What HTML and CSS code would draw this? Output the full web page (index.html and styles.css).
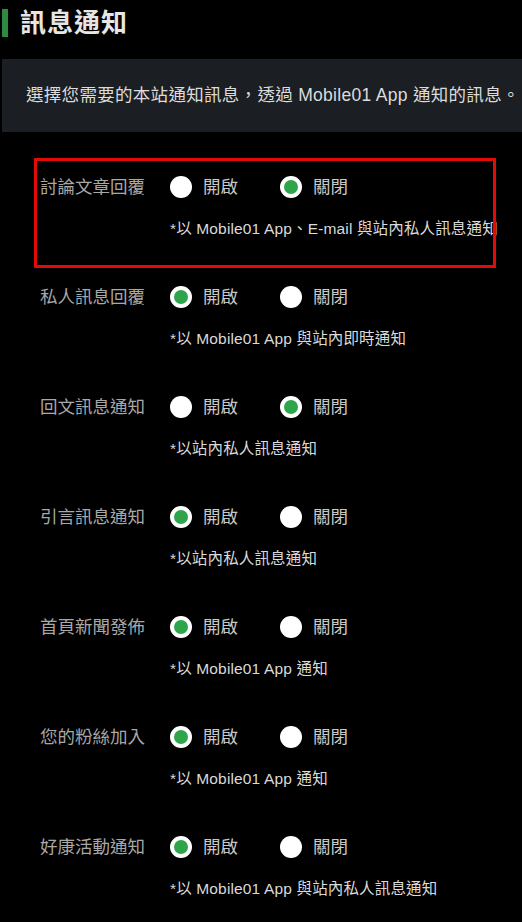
FILE: index.html
```html
<!DOCTYPE html>
<html lang="zh-Hant">
<head>
    <meta charset="UTF-8">
    <meta name="viewport" content="width=device-width, initial-scale=1.0">
    <title>訊息通知</title>
    <link rel="stylesheet" href="styles.css">
</head>
<body>
    <div class="page">
        <h2 class="title">訊息通知</h2>
        <div class="intro">選擇您需要的本站通知訊息，透過 Mobile01 App 通知的訊息。</div>

        <div class="list">
            <div class="row highlight">
                <div class="label">討論文章回覆</div>
                <div class="body">
                    <div class="options">
                        <label class="option"><span class="radio"></span>開啟</label>
                        <label class="option"><span class="radio on"></span>關閉</label>
                    </div>
                    <div class="note">*以 Mobile01 App、E-mail 與站內私人訊息通知</div>
                </div>
            </div>
            <div class="row">
                <div class="label">私人訊息回覆</div>
                <div class="body">
                    <div class="options">
                        <label class="option"><span class="radio on"></span>開啟</label>
                        <label class="option"><span class="radio"></span>關閉</label>
                    </div>
                    <div class="note">*以 Mobile01 App 與站內即時通知</div>
                </div>
            </div>
            <div class="row">
                <div class="label">回文訊息通知</div>
                <div class="body">
                    <div class="options">
                        <label class="option"><span class="radio"></span>開啟</label>
                        <label class="option"><span class="radio on"></span>關閉</label>
                    </div>
                    <div class="note">*以站內私人訊息通知</div>
                </div>
            </div>
            <div class="row">
                <div class="label">引言訊息通知</div>
                <div class="body">
                    <div class="options">
                        <label class="option"><span class="radio on"></span>開啟</label>
                        <label class="option"><span class="radio"></span>關閉</label>
                    </div>
                    <div class="note">*以站內私人訊息通知</div>
                </div>
            </div>
            <div class="row">
                <div class="label">首頁新聞發佈</div>
                <div class="body">
                    <div class="options">
                        <label class="option"><span class="radio on"></span>開啟</label>
                        <label class="option"><span class="radio"></span>關閉</label>
                    </div>
                    <div class="note">*以 Mobile01 App 通知</div>
                </div>
            </div>
            <div class="row">
                <div class="label">您的粉絲加入</div>
                <div class="body">
                    <div class="options">
                        <label class="option"><span class="radio on"></span>開啟</label>
                        <label class="option"><span class="radio"></span>關閉</label>
                    </div>
                    <div class="note">*以 Mobile01 App 通知</div>
                </div>
            </div>
            <div class="row">
                <div class="label">好康活動通知</div>
                <div class="body">
                    <div class="options">
                        <label class="option"><span class="radio on"></span>開啟</label>
                        <label class="option"><span class="radio"></span>關閉</label>
                    </div>
                    <div class="note">*以 Mobile01 App 與站內私人訊息通知</div>
                </div>
            </div>
        </div>
    </div>
</body>
</html>
```

FILE: styles.css
```css
body {
    font-family: 'Liberation Sans', 'Noto Sans CJK TC', sans-serif;
    background-color: #000;
    color: #ddd;
    margin: 0;
    overflow: hidden;
}

.page {
    padding-top: 9px;
}

.title {
    margin: 0 0 0 2px;
    padding-left: 12px;
    border-left: 6px solid #2e8a40;
    font-size: 26px;
    font-weight: 700;
    letter-spacing: 1px;
    line-height: 28px;
    color: #e6e6e6;
}

.intro {
    margin: 22px 0 0 2px;
    padding: 24px 0 24px 24px;
    background-color: #1b1e22;
    font-size: 17.5px;
    letter-spacing: 0.3px;
    line-height: 25px;
    white-space: nowrap;
    color: #dcdcdc;
}

.list {
    margin-top: 26px;
}

.row {
    position: relative;
    display: flex;
    height: 110px;
    box-sizing: border-box;
    margin: 0 26px 0 34px;
    padding: 18px 0 0 6px;
}

.row.highlight::after {
    content: '';
    position: absolute;
    inset: 0;
    border: 3px solid #e30a0a;
}

.label {
    width: 130px;
    flex-shrink: 0;
    font-size: 17.5px;
    line-height: 22px;
    color: #a8a8a8;
}

.options {
    display: flex;
}

.option {
    display: flex;
    align-items: center;
    width: 110px;
    font-size: 17.5px;
    line-height: 22px;
    color: #c8c8c8;
}

.radio {
    width: 22px;
    height: 22px;
    border-radius: 50%;
    background-color: #fff;
    margin-right: 11px;
    flex-shrink: 0;
    box-sizing: border-box;
}

.radio.on {
    border: 4.5px solid #fff;
    background-color: #2fa54b;
}

.note {
    margin-top: 21px;
    font-size: 15.5px;
    letter-spacing: 0.15px;
    line-height: 20px;
    white-space: nowrap;
    color: #dadada;
}
```
